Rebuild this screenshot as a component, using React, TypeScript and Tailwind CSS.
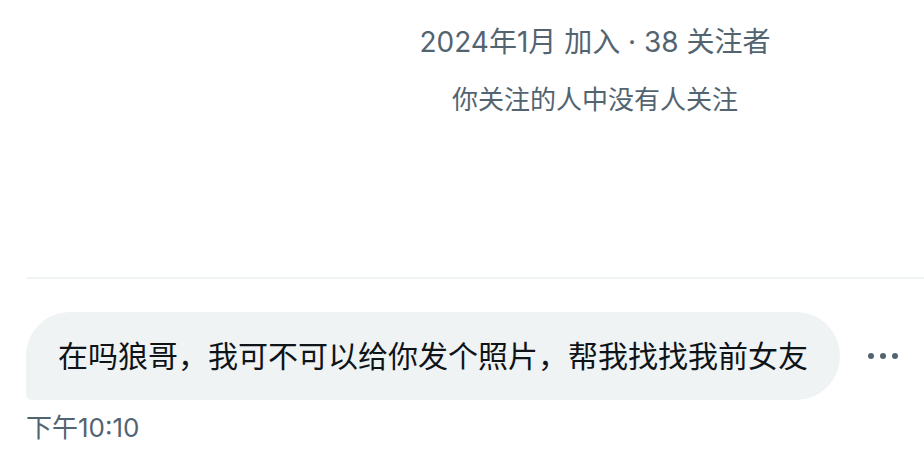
import React from "react";

const font = { fontFamily: '"Inter", "Noto Sans CJK SC", sans-serif' };

export default function App() {
  return (
    <div className="w-[924px] h-[472px] bg-white overflow-hidden" style={font}>
      <div className="flex flex-col items-center pl-[266px] pt-[22px]">
        <div className="text-[28px] leading-[40px] text-[#536471]">2024年1月 加入 · 38 关注者</div>
        <div className="mt-[21px] text-[26px] leading-[34px] text-[#536471]">你关注的人中没有人关注</div>
      </div>
      <div className="ml-[27px] mt-[160px] h-[2px] bg-[#eff3f4]" />
      <div className="pl-[26px] mt-[33px]">
        <div className="flex items-center">
          <div className="bg-[#eff3f4] rounded-[44px] rounded-bl-[6px] pl-[32px] pr-[32px] py-[24px] text-[30px] leading-[40px] text-[#0f1419]">
            在吗狼哥，我可不可以给你发个照片，帮我找找我前女友
          </div>
          <div className="ml-[28px] flex gap-[6px]">
            <span className="w-[6px] h-[6px] rounded-full bg-[#536471]" />
            <span className="w-[6px] h-[6px] rounded-full bg-[#536471]" />
            <span className="w-[6px] h-[6px] rounded-full bg-[#536471]" />
          </div>
        </div>
        <div className="mt-[12px] text-[26px] leading-[32px] text-[#536471]">下午10:10</div>
      </div>
    </div>
  );
}
